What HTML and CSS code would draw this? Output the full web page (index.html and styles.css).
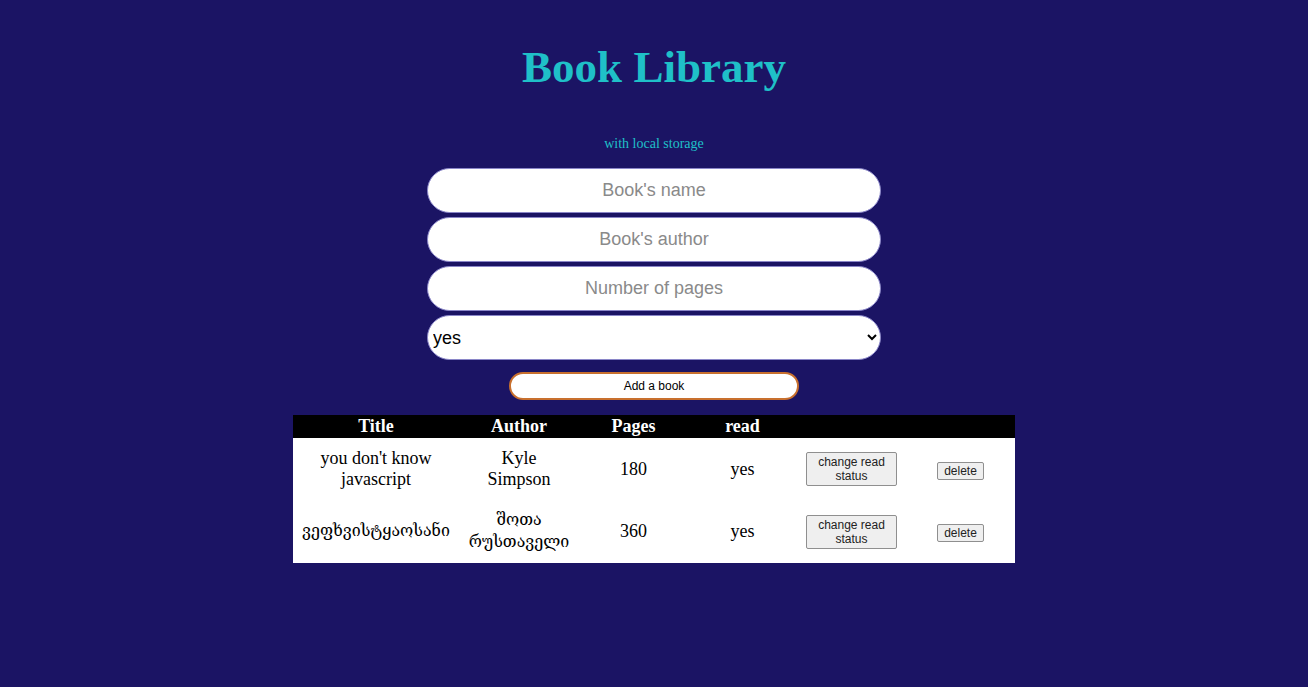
FILE: index.html
```html
<!DOCTYPE html>
<html lang="en">
<head>
<meta charset="utf-8">
<title>Book Library</title>
<link rel="stylesheet" href="styles.css">
</head>
<body>
<header class="header">
  <h1 class="title">Book Library</h1>
  <p class="subtitle">with local storage</p>
</header>
<form class="book-form">
  <input class="field" type="text" placeholder="Book's name">
  <input class="field" type="text" placeholder="Book's author">
  <input class="field" type="text" placeholder="Number of pages">
  <select class="field select">
    <option>yes</option>
    <option>no</option>
  </select>
  <button class="add-btn" type="button">Add a book</button>
</form>
<table class="books">
  <colgroup>
    <col class="c-title"><col class="c-author"><col class="c-std"><col class="c-std"><col class="c-std"><col class="c-std">
  </colgroup>
  <thead>
    <tr><th>Title</th><th>Author</th><th>Pages</th><th>read</th><th></th><th></th></tr>
  </thead>
  <tbody>
    <tr>
      <td>you don't know javascript</td>
      <td>Kyle Simpson</td>
      <td>180</td>
      <td>yes</td>
      <td><button class="tbtn change" type="button">change read status</button></td>
      <td><button class="tbtn" type="button">delete</button></td>
    </tr>
    <tr>
      <td class="geo">ვეფხვისტყაოსანი</td>
      <td class="geo">შოთა რუსთაველი</td>
      <td>360</td>
      <td>yes</td>
      <td><button class="tbtn change" type="button">change read status</button></td>
      <td><button class="tbtn" type="button">delete</button></td>
    </tr>
  </tbody>
</table>
</body>
</html>
```
FILE: styles.css
```css
html, body {
  margin: 0;
  padding: 0;
}
body {
  background: #1b1464;
  font-family: "Liberation Serif", "Times New Roman", serif;
  min-height: 687px;
}
.header {
  padding-top: 42px;
  text-align: center;
}
.title {
  margin: 0;
  font-size: 45px;
  line-height: 50px;
  font-weight: bold;
  color: #1fc0c8;
}
.subtitle {
  margin: 44px 0 0;
  font-size: 14px;
  line-height: 16px;
  color: #1fc0c8;
}
.book-form {
  display: flex;
  flex-direction: column;
  align-items: center;
  gap: 4px;
  margin-top: 16px;
}
.field {
  box-sizing: border-box;
  width: 454px;
  height: 45px;
  border: 1px solid #8a86c8;
  border-radius: 24px;
  background: #fff;
  font-family: "Liberation Sans", Arial, sans-serif;
  font-size: 18px;
  text-align: center;
  color: #000;
  outline: none;
}
.field::placeholder {
  color: #8a8a8a;
}
.select {
  text-align: left;
  padding: 0 0 0 1px;
  color: #000;
}
.add-btn {
  box-sizing: border-box;
  margin-top: 8px;
  width: 290px;
  height: 28px;
  border: 2px solid #c8702e;
  border-radius: 14px;
  background: #fff;
  font-family: "Liberation Sans", Arial, sans-serif;
  font-size: 12px;
  color: #000;
}
.books {
  margin: 15px auto 0;
  width: 722px;
  table-layout: fixed;
  border-collapse: collapse;
  background: #fff;
  font-size: 18px;
}
.c-title { width: 166px; }
.c-author { width: 120px; }
.c-std { width: 109px; }
.books th {
  background: #000;
  color: #fff;
  font-weight: bold;
  padding: 1px 0;
  line-height: 21px;
  height: 21px;
}
.books td {
  text-align: center;
  padding: 10px 9px;
  color: #000;
  line-height: 21px;
}
.books td.geo {
  padding: 9px 2px 10px;
  font-family: "DejaVu Serif", "DejaVu Sans", serif;
  font-size: 16px;
  line-height: 22px;
}
.tbtn {
  font-family: "Liberation Sans", Arial, sans-serif;
  font-size: 12px;
  line-height: 14px;
  padding: 1px 6px;
  background: #efefef;
  border: 1px solid #8f8f8f;
  border-radius: 2px;
  color: #222;
}
.change {
  width: 91px;
  padding: 2px 6px;
}
```
